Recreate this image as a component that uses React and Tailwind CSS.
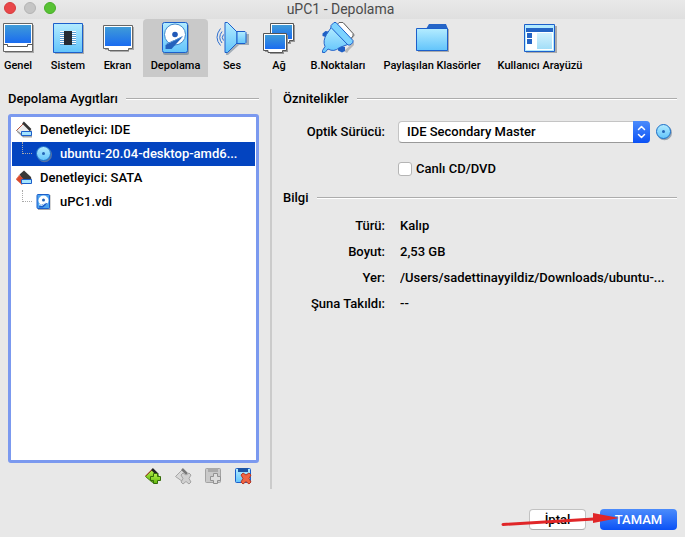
import React from 'react';

function Gradients() {
  return (
    <svg className="absolute size-0" aria-hidden="true">
      <defs>
        <linearGradient id="screen" x1="0" y1="0" x2="0" y2="1">
          <stop offset="0" stopColor="#3f9bd8" />
          <stop offset="1" stopColor="#1a6cf0" />
        </linearGradient>
        <linearGradient id="sky" x1="0" y1="0" x2="0" y2="1">
          <stop offset="0" stopColor="#b4ecff" />
          <stop offset="1" stopColor="#62c4fb" />
        </linearGradient>
        <linearGradient id="pane" x1="0" y1="0" x2="0" y2="1">
          <stop offset="0" stopColor="#d4f2fd" />
          <stop offset="1" stopColor="#a2def8" />
        </linearGradient>
        <linearGradient id="lime" x1="0" y1="0" x2="0" y2="1">
          <stop offset="0" stopColor="#b8f04a" />
          <stop offset="1" stopColor="#5fb80c" />
        </linearGradient>
      </defs>
    </svg>
  );
}

function ToolIcon({ children }) {
  return (
    <svg viewBox="0 0 32 32" className="size-8 shrink-0 overflow-visible" aria-hidden="true">
      {children}
    </svg>
  );
}

const GeneralIcon = () => (
  <ToolIcon>
    <path d="M3 3h29v28H3z" fill="#aaa" />
    <path d="M1.500 1.500h29v28h-29z" fill="#fff" stroke="#666" />
    <path d="M3 3h26v18H3z" fill="url(#screen)" />
    <path d="M1.500 22.500h4v2h20v-2h5" fill="none" stroke="#555" />
  </ToolIcon>
);

const SystemIcon = () => (
  <ToolIcon>
    <path d="M3 3h29v29H3z" fill="#aaa" />
    <path d="M1.500 1.500h29v29h-29z" fill="url(#sky)" stroke="#1c5fcb" />
    <path d="M8 9.500h16M8 11.500h16M8 13.500h16M8 15.500h16M8 17.500h16M8 19.500h16M8 21.500h16" stroke="#fff" />
    <path d="M8 10.500h16M8 12.500h16M8 14.500h16M8 16.500h16M8 18.500h16M8 20.500h16M8 22.500h16" stroke="#5b9ed4" />
    <path d="M12 9h8v14h-8z" fill="#252b33" />
  </ToolIcon>
);

const DisplayIcon = () => (
  <ToolIcon>
    <path d="M3 5h29v23h-5v2H8v-2H3z" fill="#aaa" />
    <path d="M1.500 3.500h29v23h-4v2h-20v-2h-5z" fill="#fff" stroke="#666" />
    <path d="M3 5h26v19H3z" fill="url(#screen)" />
  </ToolIcon>
);

const StorageIcon = () => (
  <ToolIcon>
    <rect x="3" y="2" width="26" height="31" rx="2" fill="#8e9ba4" />
    <rect x="2.500" y=".5" width="25" height="30" rx="2" fill="url(#sky)" stroke="#1c5fcb" />
    <circle cx="15" cy="12.500" r="10.500" fill="#fff" stroke="#4389cc" />
    <circle cx="15" cy="12.500" r="2.800" fill="#2059b8" />
    <path d="M22.500 15L11.500 27H5.500V23L17 17z" fill="#2462bd" />
    <path d="M6.500 22L14 18.500M22.500 14.500l-8 4" stroke="#4f8ed2" fill="none" />
  </ToolIcon>
);

const AudioIcon = () => (
  <ToolIcon>
    <path d="M10 2l12 10h11v11H23L12 33h-2z" fill="#a3adb6" />
    <path d="M9 .5h2.500L21 10v11L11.500 30.500H9z" fill="url(#sky)" stroke="#1c5fcb" />
    <path d="M21 9.500h8l1 1v10l-1 1h-8z" fill="url(#sky)" stroke="#1c5fcb" />
    <path d="M4.500 6.500q-7 9 0 17M6 9.500q-4.500 6 0 11.500M7.500 12.500q-2.500 3 0 6" fill="none" stroke="#2d6fd0" />
  </ToolIcon>
);

function MiniScreen({ transform }) {
  return (
    <g transform={transform}>
      <path d="M2 2h23v17h-4v2H7v-2H2z" fill="#999" />
      <path d="M.5.500h23v17h-4v2H5v-2H.500z" fill="#fff" stroke="#555" />
      <path d="M2 2h20v14H2z" fill="url(#screen)" />
    </g>
  );
}

const NetworkIcon = () => (
  <ToolIcon>
    <MiniScreen transform="translate(7 1)" />
    <MiniScreen transform="translate(0 11)" />
  </ToolIcon>
);

const PortsIcon = () => (
  <ToolIcon>
    <path d="M18 2l4-1 11 12-3 4z" fill="#aaa" />
    <path d="M15 3l2-2.500h4l10 11v2.500l-2.500 3z" fill="#fff" stroke="#666" />
    <path d="M22 29l10-9v3l-5 5-2 3z" fill="#999" opacity=".6" />
    <path d="M.5 11.500l3-2.500 3 .5 1 4-4 1.500-3-1z" fill="#1f5fc4" />
    <path d="M16 26l3-2 4 1v4l-3 1.500-4-2z" fill="#1f5fc4" />
    <path d="M9.500 5L4.500 12.500Q.5 19 3 24.500L.5 28.500v2h2.500l3-3.500q6 3.500 11.500-1.500L27 22z" fill="url(#sky)" stroke="#2765ca" />
    <path d="M9 3.500L12 .5h2L31 18.500v2L28 23h-2L9 5.500z" fill="#7dd3ff" stroke="#1c5fcb" />
  </ToolIcon>
);

const FolderIcon = () => (
  <ToolIcon>
    <path d="M2 7h31v23H2z" fill="#aaa" />
    <path d="M10 7l3-5h17l2 5z" fill="#2565c7" />
    <path d="M.5 6.500h31v22H.500z" fill="url(#sky)" stroke="#1c5fcb" />
  </ToolIcon>
);

const InterfaceIcon = () => (
  <ToolIcon>
    <path d="M2 4h31v27H2z" fill="#aaa" />
    <path d="M.5 2.500h30v27H.500z" fill="#b2eaff" stroke="#1c5fcb" />
    <path d="M2 6h27v4H2z" fill="#2464c4" />
    <path d="M2 10h27v18H2z" fill="#fff" />
    <path d="M3 11h5v5H3zM3 17h5v5H3z" fill="#2464c4" />
    <path d="M13 11h15v16H13z" fill="url(#pane)" />
  </ToolIcon>
);

function SmallIcon({ children }) {
  return (
    <svg viewBox="0 0 16 16" className="size-4 shrink-0 overflow-visible" aria-hidden="true">
      {children}
    </svg>
  );
}

const IdeIcon = () => (
  <SmallIcon>
    <path d="M1 10l6 5.500h9V9L9 2z" fill="#aaa" />
    <path d="M.5 8.500l7-7 7 6.500-7 6z" fill="#ececec" stroke="#888" />
    <path d="M.5 8.500l7-7" stroke="#b7543c" />
    <path d="M7 .5l7.500 7.500" stroke="#333" strokeWidth="2.500" />
    <path d="M5.500 9.500h10v4h-10z" fill="#a5e5ff" stroke="#1c5fcb" />
  </SmallIcon>
);

const SataIcon = () => (
  <SmallIcon>
    <path d="M3.500 4.500L8 .5l7 6.500.5 3H7z" fill="#3a3a3a" />
    <path d="M0 9.500L3.500 5 8 9.500 6 15z" fill="#d9492c" />
    <path d="M.5 9l3-4" stroke="#e57b60" />
    <path d="M5.500 9.500h10v4h-10z" fill="#a5e5ff" stroke="#1c5fcb" />
  </SmallIcon>
);

const DiscIcon = () => (
  <SmallIcon>
    <circle cx="8.500" cy="8.700" r="7.500" fill="#789" opacity=".7" />
    <circle cx="7.500" cy="7.500" r="7" fill="url(#sky)" stroke="#1c6fc8" />
    <circle cx="7.500" cy="7.500" r="1.500" fill="#2465b7" />
  </SmallIcon>
);

const DriveIcon = () => (
  <SmallIcon>
    <path d="M2 1h12.500v15H2z" fill="#aaa" />
    <rect x="1" y=".5" width="12.500" height="14" rx="1" fill="#4da3ee" stroke="#1c5fcb" />
    <circle cx="7.500" cy="6.500" r="5" fill="#fff" />
    <circle cx="7.500" cy="6" r="1.500" fill="#2465b7" />
    <path d="M3 12.500l3-2 4-1.500 1.500.5-4.500 4H3z" fill="#1c5fcb" />
    <path d="M3 10.500l3 1 4-3" stroke="#d9f1ff" fill="none" />
  </SmallIcon>
);

const CROSS = 'M6 7L8 5l3 2 3-2 2 2-2 3.500L16 14l-2 2-3-2.500L8 16l-2-2 2-3.500z';
const PLUS = 'M8.500 5.500h4v3h3v4h-3v3h-4v-3h-3v-4h3z';

const AddControllerIcon = () => (
  <SmallIcon>
    <path d="M.5 8.500l7-7 6 6-6 7z" fill="url(#lime)" stroke="#477a18" />
    <path d="M.5 8l6.500-6.500" stroke="#b83c26" />
    <path d="M7 1l6 6" stroke="#222" strokeWidth="2.500" />
    <path d={PLUS} fill="url(#lime)" stroke="#356b0a" />
  </SmallIcon>
);

const RemoveControllerIcon = () => (
  <SmallIcon>
    <path d="M.5 8.500l7-7 6 6-6 6z" fill="#d8d8d8" stroke="#a5a5a5" />
    <path d="M7 1l5 5" stroke="#777" strokeWidth="2.500" />
    <path d={CROSS} fill="#d0d0d0" stroke="#a3a3a3" />
  </SmallIcon>
);

const AddAttachmentIcon = () => (
  <SmallIcon>
    <rect x=".5" y=".5" width="15" height="14" rx="1" fill="#c9c9c9" stroke="#a3a3a3" />
    <path d="M3 0h10v4H3z" fill="#aaa" />
    <path d={PLUS} fill="#ddd" stroke="#929292" />
  </SmallIcon>
);

const RemoveAttachmentIcon = () => (
  <SmallIcon>
    <rect x=".5" y=".5" width="15" height="14" rx="1" fill="url(#sky)" stroke="#1c5fcb" />
    <path d="M3 0h10v4H3z" fill="#1c55a5" />
    <path d={CROSS} fill="#ee6543" stroke="#b83822" />
  </SmallIcon>
);

const pages = [
  { label: 'Genel', Icon: GeneralIcon, width: 'w-9 mr-2' },
  { label: 'Sistem', Icon: SystemIcon, width: 'w-12' },
  { label: 'Ekran', Icon: DisplayIcon, width: 'w-[51px]' },
  { label: 'Depolama', Icon: StorageIcon, width: 'w-[65px]', active: true },
  { label: 'Ses', Icon: AudioIcon, width: 'w-12' },
  { label: 'Ağ', Icon: NetworkIcon, width: 'w-[46px]' },
  { label: 'B.Noktaları', Icon: PortsIcon, width: 'w-[72px]' },
  { label: 'Paylaşılan Klasörler', Icon: FolderIcon, width: 'w-[116px]' },
  { label: 'Kullanıcı Arayüzü', Icon: InterfaceIcon, width: 'w-[100px]' },
];

const devices = [
  { label: 'Denetleyici: IDE', Icon: IdeIcon },
  { label: 'ubuntu-20.04-desktop-amd6...', Icon: DiscIcon, child: true, selected: true },
  { label: 'Denetleyici: SATA', Icon: SataIcon },
  { label: 'uPC1.vdi', Icon: DriveIcon, child: true },
];

const actions = [
  { label: 'Denetleyici ekle', Icon: AddControllerIcon },
  { label: 'Denetleyiciyi kaldır', Icon: RemoveControllerIcon, disabled: true },
  { label: 'Takılı aygıt ekle', Icon: AddAttachmentIcon, disabled: true },
  { label: 'Takılı aygıtı kaldır', Icon: RemoveAttachmentIcon },
];

const info = [
  ['Türü:', 'Kalıp'],
  ['Boyut:', '2,53 GB'],
  ['Yer:', '/Users/sadettinayyildiz/Downloads/ubuntu-...'],
  ['Şuna Takıldı:', '--'],
];

function SectionTitle({ children }) {
  return (
    <div className="flex h-5 items-center gap-2">
      <h2 className="font-medium">{children}</h2>
      <span className="h-[2px] flex-1 border-t border-b border-t-[#acacac] border-b-white" />
    </div>
  );
}

function TitleBar() {
  return (
    <header className="grid h-[19px] grid-cols-[1fr_auto_1fr] items-center bg-linear-to-b from-[#e9e9e9] to-[#dfdfdf] pl-1">
      <div className="flex gap-2 pb-1">
        <button aria-label="Kapat" className="size-3 rounded-full border border-[#d63b3c] bg-[#e9474a]" />
        <button aria-label="Küçült" className="size-3 rounded-full border border-[#b4b4b4] bg-[#c5c5c5]" />
        <button aria-label="Büyüt" className="size-3 rounded-full border border-[#47ad27] bg-[#58c234]" />
      </div>
      <h1 className="mr-2 pb-[2px] text-[14px] leading-4 font-normal text-[#4b4b4b]">uPC1 - Depolama</h1>
    </header>
  );
}

function PageTabs() {
  return (
    <nav className="flex h-[58px]">
      {pages.map(({ label, Icon, width, active }) => (
        <button
          key={label}
          className={`flex shrink-0 flex-col items-center gap-1 rounded-t pt-[3px] text-[11px] leading-4 font-medium whitespace-nowrap ${width} ${active ? 'bg-[#c9c9c9]' : ''}`}
        >
          <Icon />
          <span>{label}</span>
        </button>
      ))}
    </nav>
  );
}

function DeviceTree() {
  return (
    <section className="flex w-[251px] shrink-0 flex-col">
      <SectionTitle>Depolama Aygıtları</SectionTitle>
      <ul className="mt-[5px] h-[349px] rounded-[3px] border-3 border-[#7b99ef] bg-white">
        {devices.map(({ label, Icon, child, selected }, i) => (
          <li
            key={label}
            className={`mx-px flex h-6 items-center gap-2 pr-1 ${i === 0 ? 'mt-px' : ''} ${child ? 'pl-[10px]' : 'pl-1'} ${selected ? 'bg-[#0344c0] text-white' : ''}`}
          >
            {child && (
              <span className="-mr-1 h-3 w-[10px] shrink-0 self-start border-b border-l border-dotted border-[#aaa]" />
            )}
            <Icon />
            <span className="min-w-0 flex-1 truncate leading-[22px]">{label}</span>
          </li>
        ))}
      </ul>
      <div className="mt-[5px] flex justify-end gap-[14px] pr-2">
        {actions.map(({ label, Icon, disabled }) => (
          <button key={label} aria-label={label} disabled={disabled}>
            <Icon />
          </button>
        ))}
      </div>
    </section>
  );
}

function Attributes() {
  return (
    <section className="min-w-0 flex-1">
      <SectionTitle>Öznitelikler</SectionTitle>
      <div className="mt-3 grid grid-cols-[102px_1fr] items-center gap-x-[13px] gap-y-4">
        <label htmlFor="drive" className="text-right">Optik Sürücü:</label>
        <div className="flex items-center gap-[6px]">
          <div className="relative min-w-0 flex-1">
            <select
              id="drive"
              className="block h-[22px] w-full appearance-none rounded border border-[#c4c4c4] border-b-[#999] bg-white pr-5 pb-[2px] pl-2 font-medium"
            >
              <option>IDE Secondary Master</option>
            </select>
            <span className="pointer-events-none absolute inset-y-0 right-0 w-[17px] rounded-r bg-linear-to-b from-[#4b8bfb] to-[#0a50f5]">
              <svg viewBox="0 0 17 22" className="h-full w-full" fill="none" stroke="#fff" strokeWidth="1.500" strokeLinecap="round" strokeLinejoin="round">
                <path d="M5.500 8.500l3-3 3 3M5.500 13.500l3 3 3-3" />
              </svg>
            </span>
          </div>
          <button aria-label="Disk seç" className="w-[21px]">
            <DiscIcon />
          </button>
        </div>
        <label className="col-start-2 flex items-center gap-1">
          <input type="checkbox" className="size-[14px] appearance-none rounded-[3px] border border-[#b5b5b5] bg-white" />
          Canlı CD/DVD
        </label>
      </div>
      <div className="mt-[9px]">
        <SectionTitle>Bilgi</SectionTitle>
      </div>
      <dl className="mt-[5px] grid grid-cols-[102px_1fr] gap-x-[15px] leading-[26px]">
        {info.map(([term, value]) => (
          <React.Fragment key={term}>
            <dt className="text-right whitespace-nowrap">{term}</dt>
            <dd className="truncate">{value}</dd>
          </React.Fragment>
        ))}
      </dl>
    </section>
  );
}

export default function App() {
  return (
    <div className="relative flex min-h-screen flex-col overflow-hidden bg-[#e8e8e8] font-[Roboto,'Liberation_Sans',sans-serif] text-[13px] leading-5 font-medium text-black">
      <Gradients />
      <TitleBar />
      <PageTabs />
      <main className="flex flex-1 gap-[11px] px-2 pt-3">
        <DeviceTree />
        <div className="h-[400px] w-[2px] shrink-0 bg-[#cbcbcb]" />
        <Attributes />
      </main>
      <footer className="relative flex justify-end gap-[14px] px-2 pt-4 pb-[7px]">
        <button className="h-[21px] w-[57px] rounded border border-[#c2c2c2] border-b-[#aaa] bg-white leading-[18px]">İptal</button>
        <button className="h-[21px] w-[77px] rounded bg-linear-to-b from-[#4b8bfb] to-[#0a50f5] leading-[18px] text-white">TAMAM</button>
        <svg viewBox="0 0 118 14" className="pointer-events-none absolute right-[66px] bottom-[9px] h-[14px] w-[118px] overflow-visible" aria-hidden="true">
          <path d="M2 10.500L93 5" stroke="#e02628" strokeWidth="3" strokeLinecap="round" />
          <path d="M92 -1L118 4L92 9z" fill="#e02628" />
        </svg>
      </footer>
    </div>
  );
}
